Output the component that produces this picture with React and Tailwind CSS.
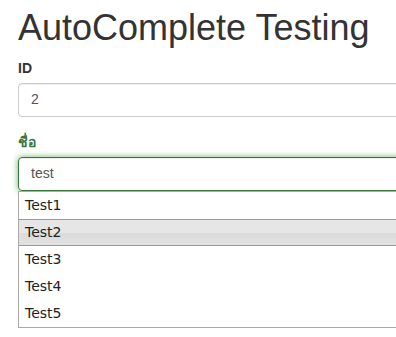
export default function App() {
  const items = ["Test1", "Test2", "Test3", "Test4", "Test5"];
  return (
    <div className="w-[396px] h-[337px] overflow-hidden bg-white" style={{ fontFamily: '"Liberation Sans", Arial, sans-serif' }}>
      <div className="w-[520px] pl-[18px] pt-[8px]">
        <h1 className="text-[36px] leading-[1.1] font-medium text-[#333] mb-[10px]">AutoComplete Testing</h1>
        <div className="mb-[15px]">
          <label className="block text-[14px] leading-[20px] font-bold text-[#333] mb-[5px]">ID</label>
          <div className="h-[34px] border border-[#ccc] rounded-[4px] px-[12px] flex items-center text-[14px] text-[#555] shadow-[inset_0_1px_1px_rgba(0,0,0,0.075)]">
            2
          </div>
        </div>
        <div>
          <label className="block text-[14px] leading-[20px] font-bold text-[#3c763d] mb-[5px]">ชื่อ</label>
          <div className="h-[34px] border border-[#3c763d] rounded-[4px] px-[12px] flex items-center text-[14px] text-[#555] shadow-[inset_0_1px_1px_rgba(0,0,0,0.075),0_0_6px_#67b168]">
            test
          </div>
          <div className="border border-[#aaa] bg-white" style={{ fontFamily: '"DejaVu Sans", Verdana, sans-serif' }}>
            {items.map((t) => (
              <div
                key={t}
                className={
                  "h-[27px] pl-[6px] flex items-center text-[14px] border-y " +
                  (t === "Test2"
                    ? "border-[#999] bg-[linear-gradient(to_bottom,#e6e6e6_0%,#e6e6e6_50%,#dadada_50%,#e2e2e2_100%)] text-[#212121]"
                    : "border-transparent text-[#222]")
                }
              >
                {t}
              </div>
            ))}
          </div>
        </div>
      </div>
    </div>
  );
}
